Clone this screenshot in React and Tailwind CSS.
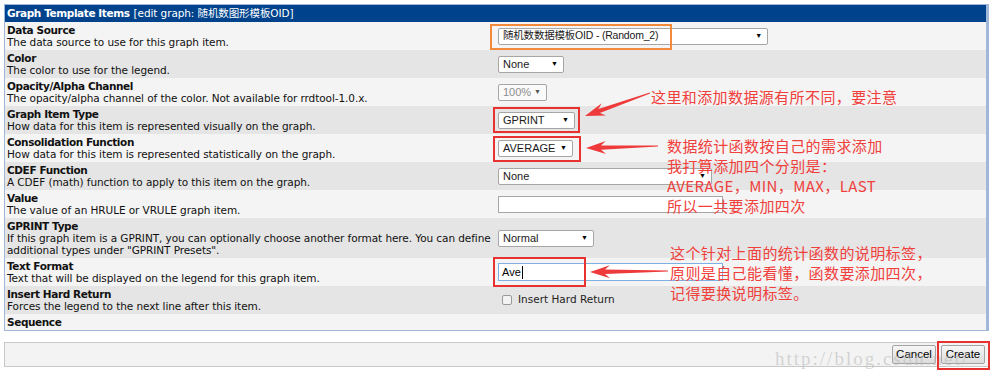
import React from "react";

const LEFT = { fontFamily: '"DejaVu Sans", "Noto Sans CJK SC", sans-serif' };
const CTRL = { fontFamily: '"Liberation Sans", "Noto Sans CJK SC", Arial, sans-serif' };
const NOTE = { fontFamily: '"Noto Sans CJK SC", "Noto Sans", sans-serif' };

const Select = ({ className, children, disabled, size = "text-[11px]" }) => (
  <div
    style={CTRL}
    className={`flex h-[17px] items-center justify-between rounded-[2px] border border-[#a6a6a6] pl-[4px] pr-[5px] ${size} ${
      disabled ? "bg-[#fafafa] text-[#8d8d8d]" : "bg-white text-[#1a1a1a]"
    } ${className}`}
  >
    <span className="whitespace-nowrap">{children}</span>
    <span className={`text-[7px] ${disabled ? "text-[#555]" : "text-black"}`}>▼</span>
  </div>
);

// tapered "brush" arrow, tail -> tip
const arrow = (tx, ty, px, py) => {
  const len = Math.hypot(px - tx, py - ty);
  const dx = (px - tx) / len;
  const dy = (py - ty) / len;
  const nx = -dy;
  const ny = dx;
  const p = (back, side) => `${px - dx * back + nx * side},${py - dy * back + ny * side}`;
  const t = (side) => `${tx + nx * side},${ty + ny * side}`;
  return [t(0.4), p(15, 2.2), p(20, 6.5), p(0, 0), p(20, -6.5), p(15, -2.2), t(-0.4)].join(" ");
};

const rows = [
  {
    t: "Data Source",
    d: "The data source to use for this graph item.",
    c: (
      <Select className="w-[270px]" size="text-[10.5px] tracking-[-0.2px]">
        随机数数据模板OID - (Random_2)
      </Select>
    ),
  },
  { t: "Color", d: "The color to use for the legend.", c: <Select className="w-[66px]">None</Select> },
  {
    t: "Opacity/Alpha Channel",
    d: "The opacity/alpha channel of the color. Not available for rrdtool-1.0.x.",
    c: (
      <Select className="w-[49px]" disabled>
        100%
      </Select>
    ),
  },
  {
    t: "Graph Item Type",
    d: "How data for this item is represented visually on the graph.",
    c: <Select className="w-[77px]">GPRINT</Select>,
  },
  {
    t: "Consolidation Function",
    d: "How data for this item is represented statistically on the graph.",
    c: <Select className="w-[75px]">AVERAGE</Select>,
  },
  {
    t: "CDEF Function",
    d: "A CDEF (math) function to apply to this item on the graph.",
    c: <Select className="w-[214px]">None</Select>,
  },
  {
    t: "Value",
    d: "The value of an HRULE or VRULE graph item.",
    c: <div className="h-[17px] w-[225px] border border-[#a6a6a6] bg-white" />,
  },
  {
    t: "GPRINT Type",
    d: 'If this graph item is a GPRINT, you can optionally choose another format here. You can define additional types under "GPRINT Presets".',
    c: <Select className="w-[96px]">Normal</Select>,
  },
  {
    t: "Text Format",
    d: "Text that will be displayed on the legend for this graph item.",
    c: (
      <div style={CTRL} className="flex h-[18px] w-[225px] items-center border border-[#7eb0e6] bg-white pl-[3px] text-[11px] text-black">
        Ave<span className="ml-[1px] h-[13px] w-px bg-black" />
      </div>
    ),
  },
  {
    t: "Insert Hard Return",
    d: "Forces the legend to the next line after this item.",
    c: (
      <div className="flex items-center">
        <span className="ml-[4px] h-[10px] w-[10px] rounded-[2px] border border-[#9a9a9a] bg-[#f3f3f3]" />
        <span style={LEFT} className="ml-[6px] text-[10.5px] text-[#222]">
          Insert Hard Return
        </span>
      </div>
    ),
  },
  { t: "Sequence" },
];

export default function App() {
  return (
    <div className="relative h-[379px] w-[993px] overflow-hidden bg-white pt-[4px]">
      <div style={LEFT} className="ml-[4px] w-[985px] border-t border-b border-l border-r-[3px] border-[#9fb7d8] text-[#111]">
        <div className="flex h-[17px] items-center bg-[#00438c] px-[2px] text-[10.5px] text-white">
          <span className="font-bold tracking-[-0.4px]">Graph Template Items</span>
          <span className="ml-[4px] tracking-[-0.1px]">[edit graph: 随机数图形模板OID]</span>
        </div>
        {rows.map((r, i) => (
          <div key={r.t} className={`flex ${i % 2 ? "bg-[#e5e5e5]" : "bg-[#f4f4f4]"}`}>
            <div className="w-[490px] py-[2px] pl-[2px] text-[10.5px] leading-[12px] tracking-[-0.08px]">
              <div className="font-bold tracking-[-0.4px]">{r.t}</div>
              {r.d && <div>{r.d}</div>}
            </div>
            <div className="flex flex-1 items-center pl-[3px]">{r.c}</div>
          </div>
        ))}
      </div>

      <div className="ml-[4px] mt-[11px] flex h-[25px] w-[985px] items-center justify-end gap-[5px] border border-[#c8c8c8] bg-[#f3f3f3] pr-[3px]">
        <button style={CTRL} className="h-[19px] w-[44px] rounded-[2px] border border-[#a3a3a3] bg-gradient-to-b from-[#f7f7f7] to-[#dcdcdc] text-[11.5px] text-black">
          Cancel
        </button>
        <button style={CTRL} className="h-[19px] w-[44px] rounded-[2px] border border-[#a3a3a3] bg-gradient-to-b from-[#f7f7f7] to-[#dcdcdc] text-[11.5px] text-black">
          Create
        </button>
      </div>

      {/* watermark */}
      <div
        style={{ fontFamily: '"Liberation Serif", serif' }}
        className="pointer-events-none absolute left-[775px] top-[345px] whitespace-nowrap text-[19px] tracking-[2px] text-[#bdbdbd]/60"
      >
        http://blog.csdn.net/
      </div>

      {/* annotation boxes */}
      <div className="absolute left-[490px] top-[24px] h-[26px] w-[182px] border-2 border-[#f28a3c]" />
      <div className="absolute left-[493px] top-[107px] h-[26px] w-[87px] border-2 border-[#e8322f]" />
      <div className="absolute left-[493px] top-[136px] h-[26px] w-[88px] border-2 border-[#e8322f]" />
      <div className="absolute left-[493px] top-[257px] h-[30px] w-[93px] border-2 border-[#e8322f]" />
      <div className="absolute left-[937px] top-[341px] h-[29px] w-[53px] border-2 border-[#e8322f]" />

      <svg className="pointer-events-none absolute left-0 top-0" width="993" height="379">
        <polygon points={arrow(650, 93, 585, 116)} fill="#ee3a3a" />
        <polygon points={arrow(658, 146, 586, 148)} fill="#ee3a3a" />
        <polygon points={arrow(668, 271, 590, 272)} fill="#ee3a3a" />
      </svg>

      <div style={NOTE} className="absolute left-[651px] top-[87px] whitespace-nowrap text-[15px] leading-[20px] tracking-[0.4px] text-[#f0403c]">
        这里和添加数据源有所不同，要注意
      </div>
      <div style={NOTE} className="absolute left-[667px] top-[136px] whitespace-nowrap text-[15px] leading-[20px] tracking-[0.4px] text-[#f0403c]">
        <div>数据统计函数按自己的需求添加</div>
        <div>我打算添加四个分别是：</div>
        <div>AVERAGE，MIN，MAX，LAST</div>
        <div>所以一共要添加四次</div>
      </div>
      <div style={NOTE} className="absolute left-[670px] top-[243px] whitespace-nowrap text-[15px] leading-[20px] tracking-[0.4px] text-[#f0403c]">
        <div>这个针对上面的统计函数的说明标签，</div>
        <div>原则是自己能看懂，函数要添加四次，</div>
        <div>记得要换说明标签。</div>
      </div>
    </div>
  );
}
